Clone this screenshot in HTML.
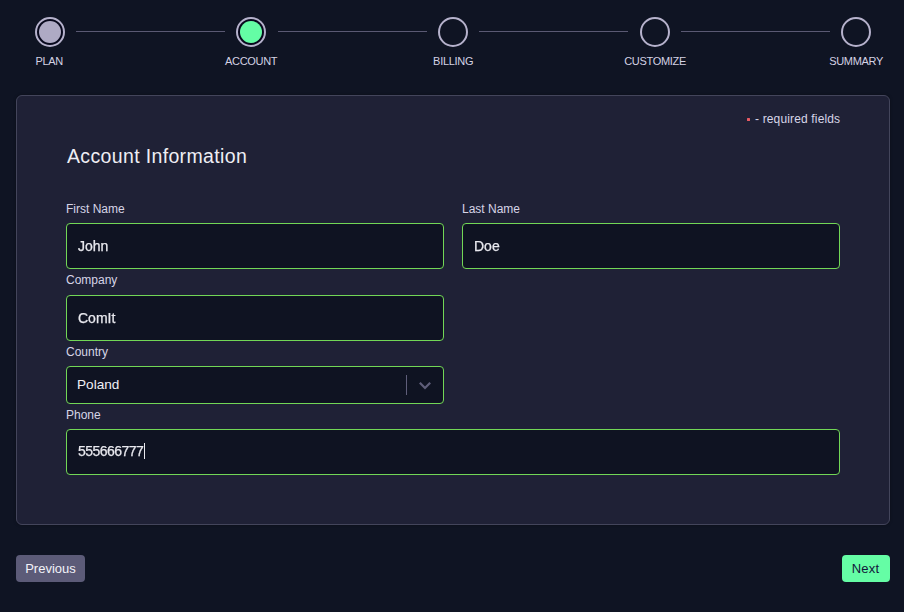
<!DOCTYPE html>
<html>
<head>
<meta charset="utf-8">
<style>
*{box-sizing:border-box;margin:0;padding:0}
html,body{width:904px;height:612px;overflow:hidden;background:#0f1423;font-family:"Liberation Sans",sans-serif}
.abs{position:absolute}
.step{position:absolute;top:17px;width:30px;height:30px;border-radius:50%;border:2px solid #b6b2cc;background:#0f1423}
.step.fill::after{content:"";position:absolute;left:2px;top:2px;width:22px;height:22px;border-radius:50%;background:#aeaac4}
.step.cur::after{content:"";position:absolute;left:2px;top:2px;width:22px;height:22px;border-radius:50%;background:#64fda5}
.step.fill,.step.cur{background:#07081c}
.line{position:absolute;top:31px;height:1px;background:#5a5973}
.slabel{position:absolute;top:55px;width:120px;text-align:center;font-size:11px;letter-spacing:-0.3px;text-indent:0.3px;line-height:12px;color:#d4d2e4}
.card{position:absolute;left:16px;top:95px;width:874px;height:430px;border:1px solid #43455b;box-shadow:0 0 3px rgba(0,0,0,0.35);border-radius:6px;background:#1f2136}
.req{position:absolute;left:747px;top:112px;font-size:12px;letter-spacing:0.15px;line-height:14px;color:#d8d6e8;white-space:nowrap}
.req i{display:inline-block;width:3px;height:3px;background:#e85a64;vertical-align:middle;margin-right:5px;position:relative;top:0px;border-radius:0.5px}
h2{position:absolute;left:67px;top:144px;font-size:19.5px;letter-spacing:0.35px;line-height:24px;font-weight:normal;color:#eeeef4;white-space:nowrap}
.lbl{position:absolute;left:66px;font-size:12px;line-height:14px;color:#d6d4e6;white-space:nowrap}
.inp{position:absolute;border:1px solid #72d756;border-radius:4px;background:#0f1322;color:#e9e9ef;font-size:14px;line-height:16px;white-space:nowrap}
.inp span{position:absolute;left:11px;will-change:transform;-webkit-text-stroke:0.25px #e9e9ef}
.btn{position:absolute;top:555px;height:27px;border-radius:4px;font-size:13px;line-height:27px;text-align:center}
</style>
</head>
<body>
<!-- stepper -->
<div class="line" style="left:76px;width:149px"></div>
<div class="line" style="left:278px;width:149px"></div>
<div class="line" style="left:479px;width:149px"></div>
<div class="line" style="left:681px;width:149px"></div>
<div class="step fill" style="left:35px"></div>
<div class="step cur" style="left:236px"></div>
<div class="step" style="left:438px"></div>
<div class="step" style="left:640px"></div>
<div class="step" style="left:841px"></div>
<div class="slabel" style="left:-11px">PLAN</div>
<div class="slabel" style="left:191px">ACCOUNT</div>
<div class="slabel" style="left:393px">BILLING</div>
<div class="slabel" style="left:595px">CUSTOMIZE</div>
<div class="slabel" style="left:796px">SUMMARY</div>

<div class="card"></div>
<div class="req"><i></i>- required fields</div>
<h2>Account Information</h2>

<div class="lbl" style="top:202px">First Name</div>
<div class="inp" style="left:66px;top:223px;width:378px;height:46px"><span style="top:14px">John</span></div>
<div class="lbl" style="left:462px;top:202px">Last Name</div>
<div class="inp" style="left:462px;top:223px;width:378px;height:46px"><span style="top:14px">Doe</span></div>

<div class="lbl" style="top:273px">Company</div>
<div class="inp" style="left:66px;top:295px;width:378px;height:46px"><span style="top:14px">ComIt</span></div>

<div class="lbl" style="top:345px">Country</div>
<div class="inp" style="left:66px;top:366px;width:378px;height:38px"><span style="top:9.5px;left:10px;font-size:13.6px;will-change:auto;-webkit-text-stroke:0;color:#f0f0f6">Poland</span>
  <div class="abs" style="left:339px;top:8px;width:1px;height:20px;background:#5f5e7a"></div>
  <svg class="abs" style="left:351px;top:12px" width="14" height="14" viewBox="0 0 14 14"><path d="M1.8 3.8 L7 9 L12.2 3.8" fill="none" stroke="#5f5e7a" stroke-width="2.2"/></svg>
</div>

<div class="lbl" style="top:408px">Phone</div>
<div class="inp" style="left:66px;top:429px;width:774px;height:46px"><span style="top:13px;letter-spacing:-0.55px">555666777</span>
  <div class="abs" style="left:77px;top:13px;width:1px;height:16px;background:#e9e9ef"></div>
</div>

<div class="btn" style="left:16px;width:69px;background:#5c5b78;color:#f2f2f8">Previous</div>
<div class="btn" style="left:842px;width:48px;background:#65fda5;color:#12163c;text-indent:-1px;letter-spacing:0.2px">Next</div>
</body>
</html>
